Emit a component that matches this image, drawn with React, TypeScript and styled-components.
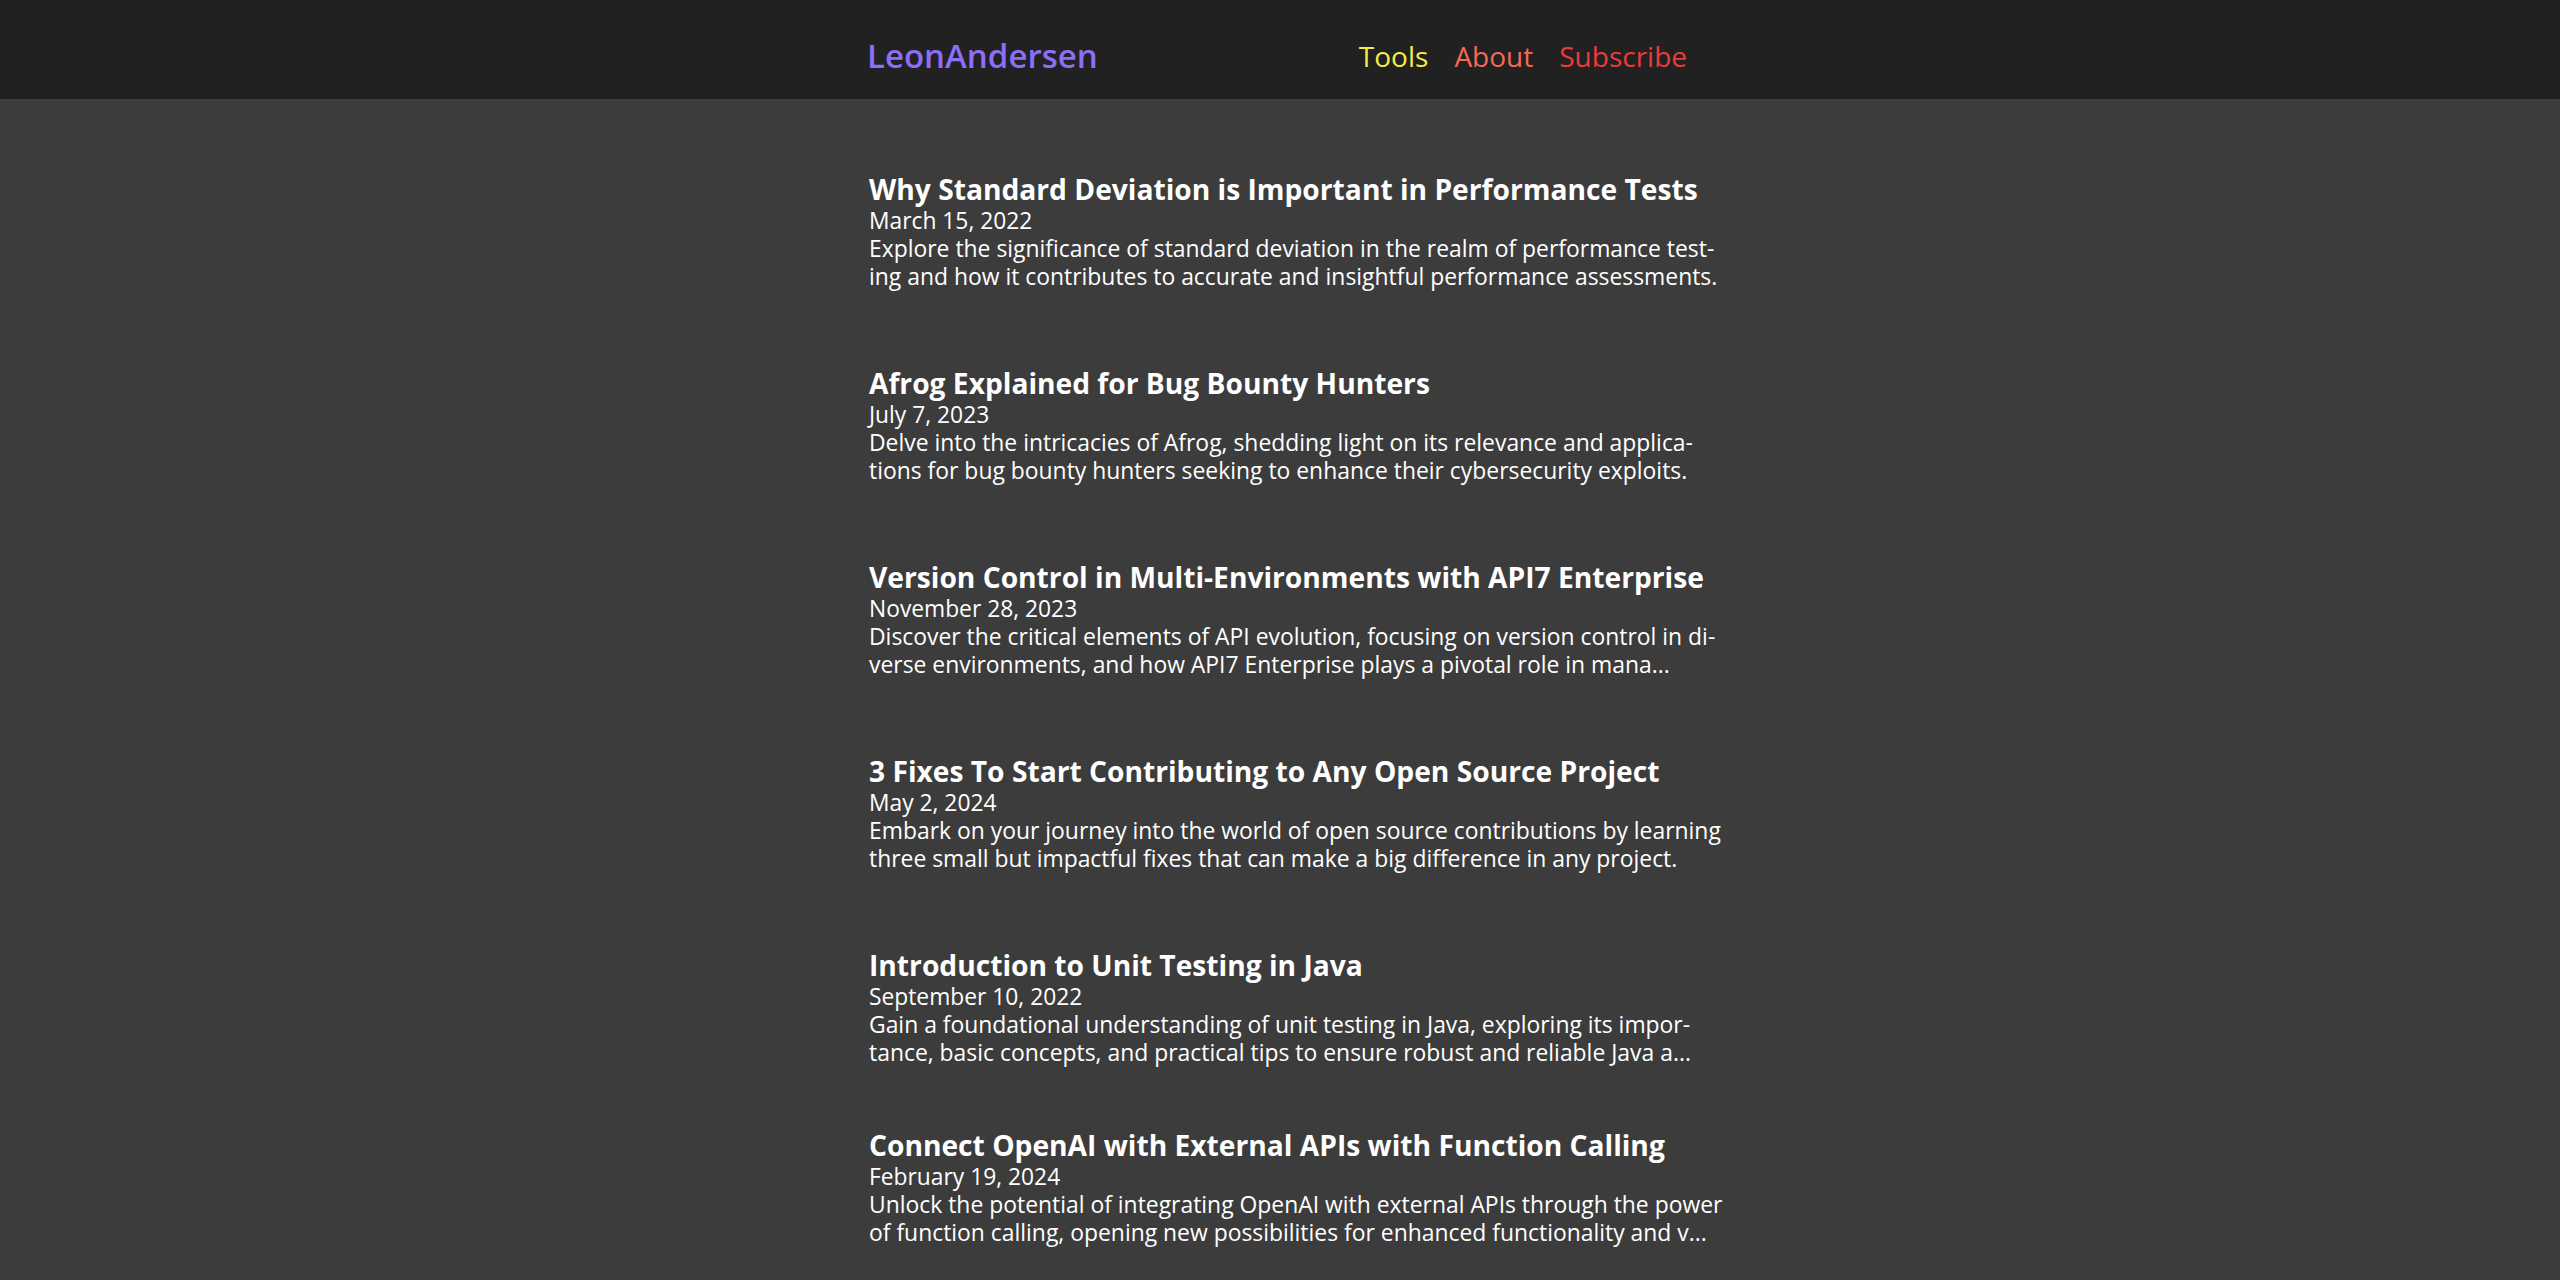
import React from 'react';
import styled, {createGlobalStyle} from 'styled-components';

const GlobalStyle = createGlobalStyle`
  html, body {
    margin: 0;
    padding: 0;
    background: #3c3c3c;
  }
  body {
    font-family: 'Open Sans', 'Noto Sans', sans-serif;
    color: #fff;
  }
`;

const Header = styled.header`
  background: #212121;
  height: 99px;
  display: flex;
  justify-content: center;
`;

const HeaderInner = styled.div`
  box-sizing: border-box;
  width: 826px;
  padding: 12px 6px 0 0;
  display: flex;
  align-items: center;
  justify-content: space-between;
`;

const Logo = styled.a`
  color: #8c6ef7;
  font-size: 33px;
  font-weight: 600;
  text-decoration: none;
`;

const Nav = styled.nav`
  display: flex;
  gap: 26px;
`;

const NavLink = styled.a<{$color: string}>`
  color: ${p => p.$color};
  font-size: 28px;
  text-decoration: none;
`;

const Main = styled.main`
  display: flex;
  justify-content: center;
  padding-top: 73px;
`;

const List = styled.div`
  box-sizing: border-box;
  width: 826px;
  padding-left: 2px;
  display: flex;
  flex-direction: column;
`;

const Post = styled.article<{$gap: number}>`
  margin-bottom: ${p => p.$gap}px;
`;

const Title = styled.h2`
  margin: 0;
  font-size: 28.2px;
  font-weight: 700;
  line-height: 34px;
  white-space: nowrap;
`;

const PostDate = styled.div`
  font-size: 22.8px;
  line-height: 29px;
`;

const Summary = styled.p`
  margin: 0;
  font-size: 22.9px;
  line-height: 28px;
  span {
    display: block;
    white-space: nowrap;
  }
`;

type PostData = {
  title: string;
  date: string;
  lines: [string, string];
};

const posts: PostData[] = [
  {
    title: 'Why Standard Deviation is Important in Performance Tests',
    date: 'March 15, 2022',
    lines: [
      'Explore the significance of standard deviation in the realm of performance test-',
      'ing and how it contributes to accurate and insightful performance assessments.',
    ],
  },
  {
    title: 'Afrog Explained for Bug Bounty Hunters',
    date: 'July 7, 2023',
    lines: [
      'Delve into the intricacies of Afrog, shedding light on its relevance and applica-',
      'tions for bug bounty hunters seeking to enhance their cybersecurity exploits.',
    ],
  },
  {
    title: 'Version Control in Multi-Environments with API7 Enterprise',
    date: 'November 28, 2023',
    lines: [
      'Discover the critical elements of API evolution, focusing on version control in di-',
      'verse environments, and how API7 Enterprise plays a pivotal role in mana...',
    ],
  },
  {
    title: '3 Fixes To Start Contributing to Any Open Source Project',
    date: 'May 2, 2024',
    lines: [
      'Embark on your journey into the world of open source contributions by learning',
      'three small but impactful fixes that can make a big difference in any project.',
    ],
  },
  {
    title: 'Introduction to Unit Testing in Java',
    date: 'September 10, 2022',
    lines: [
      'Gain a foundational understanding of unit testing in Java, exploring its impor-',
      'tance, basic concepts, and practical tips to ensure robust and reliable Java a...',
    ],
  },
  {
    title: 'Connect OpenAI with External APIs with Function Calling',
    date: 'February 19, 2024',
    lines: [
      'Unlock the potential of integrating OpenAI with external APIs through the power',
      'of function calling, opening new possibilities for enhanced functionality and v...',
    ],
  },
];

export default function App() {
  return (
    <>
      <GlobalStyle />
      <Header>
        <HeaderInner>
          <Logo href="#">LeonAndersen</Logo>
          <Nav>
            <NavLink href="#" $color="#f6ea4c">Tools</NavLink>
            <NavLink href="#" $color="#f46a55">About</NavLink>
            <NavLink href="#" $color="#ee3a3a">Subscribe</NavLink>
          </Nav>
        </HeaderInner>
      </Header>
      <Main>
        <List>
          {posts.map((post, i) => (
            <Post key={post.title} $gap={i === 4 ? 61 : 75}>
              <Title>{post.title}</Title>
              <PostDate>{post.date}</PostDate>
              <Summary>
                {post.lines.map(line => (
                  <span key={line}>{line}</span>
                ))}
              </Summary>
            </Post>
          ))}
        </List>
      </Main>
    </>
  );
}
